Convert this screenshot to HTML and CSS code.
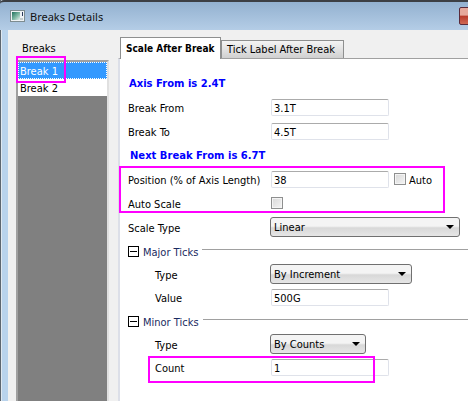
FILE: index.html
```html
<!DOCTYPE html>
<html lang="en">
<head>
  <meta charset="UTF-8">
  <title>Breaks Details</title>
  <link rel="stylesheet" href="styles.css">
</head>
<body>
  <div class="window">
    <div class="titlebar">
      <svg class="app-icon" width="15" height="12" viewBox="0 0 15 12">
        <defs>
          <linearGradient id="iconFill" x1="0" x2="1" y1="0" y2="1">
            <stop offset="0" stop-color="#1f6f5c"/>
            <stop offset="0.55" stop-color="#7fb8a4"/>
            <stop offset="1" stop-color="#e6eeee"/>
          </linearGradient>
        </defs>
        <rect x="0.5" y="0.5" width="14" height="11" fill="#eef2f4" stroke="#7d8c90"/>
        <rect x="2" y="2" width="8" height="8" fill="url(#iconFill)"/>
        <rect x="10" y="8" width="3" height="2" fill="#c4cccc"/>
        <rect x="12" y="2" width="1" height="4" fill="#2a3a5a"/>
      </svg>
      <span class="title">Breaks Details</span>
      <div class="close-btn"></div>
    </div>

    <div class="client">
      <div class="sidebar">
        <div class="list-title">Breaks</div>
        <div class="listbox">
          <div class="list-item selected">Break 1</div>
          <div class="list-item">Break 2</div>
        </div>
      </div>

      <div class="content">
        <div class="tabs">
          <div class="tab active">Scale After Break</div>
          <div class="tab">Tick Label After Break</div>
        </div>

        <div class="panel">
          <div class="row info">Axis From is 2.4T</div>
          <div class="row">
            <label class="label">Break From</label>
            <div class="input">3.1T</div>
          </div>
          <div class="row">
            <label class="label">Break To</label>
            <div class="input">4.5T</div>
          </div>
          <div class="row info next">Next Break From is 6.7T</div>
          <div class="row">
            <label class="label">Position (% of Axis Length)</label>
            <div class="input">38</div>
            <span class="check"></span>
            <span class="check-label">Auto</span>
          </div>
          <div class="row">
            <label class="label">Auto Scale</label>
            <span class="check first"></span>
          </div>
          <div class="row">
            <label class="label">Scale Type</label>
            <div class="select wide">Linear</div>
          </div>
          <div class="row group">
            <span class="toggle"></span>
            <span class="group-name">Major Ticks</span>
            <span class="group-line"></span>
          </div>
          <div class="row short">
            <label class="label sub">Type</label>
            <div class="select mid">By Increment</div>
          </div>
          <div class="row">
            <label class="label sub">Value</label>
            <div class="input">500G</div>
          </div>
          <div class="row group">
            <span class="toggle"></span>
            <span class="group-name">Minor Ticks</span>
            <span class="group-line"></span>
          </div>
          <div class="row short">
            <label class="label sub">Type</label>
            <div class="select small">By Counts</div>
          </div>
          <div class="row">
            <label class="label sub">Count</label>
            <div class="input">1</div>
          </div>
        </div>
      </div>
    </div>

    <!-- Marcas magenta sobre la captura -->
    <div class="mark mark-list"></div>
    <div class="mark mark-position"></div>
    <div class="mark mark-count"></div>
  </div>
</body>
</html>
```

FILE: styles.css
```css
body {
  margin: 0;
  font-family: "DejaVu Sans Condensed", "DejaVu Sans", sans-serif;
  font-size: 11px;
  color: #000;
  overflow: hidden;
}

.window {
  position: relative;
  width: 468px;
  height: 401px;
  display: flex;
  flex-direction: column;
  background: linear-gradient(to right, #5d6670 1px, #dfe8f0 1px, #dfe8f0 2px, #b9d3ec 2px);
  overflow: hidden;
}

/* Barra de titulo */
.titlebar {
  height: 28px;
  border-top: 2px solid #3c3f44;
  border-top-left-radius: 4px;
  display: flex;
  align-items: center;
  padding-left: 10px;
  background: linear-gradient(#93b1d0, #b4cde6);
}

.app-icon {
  margin-right: 5px;
}

.title {
  font-family: "Noto Sans", sans-serif;
  font-size: 11px;
  color: #111;
}

.close-btn {
  width: 12px;
  height: 16px;
  margin-left: auto;
  margin-right: -5px;
  border: 1px solid #5a2a3a;
  border-radius: 2px;
  background: linear-gradient(#e6a99c 45%, #b8392a 50%, #cf6a55);
}

.client {
  flex: 1;
  display: flex;
  margin-left: 8px;
  background: #f0f0f0;
  min-height: 0;
}

/* Lista de la izquierda */
.sidebar {
  width: 110px;
  flex: none;
  padding: 8px 0 0 8px;
  box-sizing: border-box;
}

.list-title {
  height: 22px;
  line-height: 21px;
  padding-left: 6px;
}

.listbox {
  height: 400px;
  width: 93px;
  box-sizing: border-box;
  border: 2px solid #a0a0a0;
  border-right-color: #e0e0e0;
  border-bottom: none;
  background: #808080;
}

.list-item {
  height: 17px;
  line-height: 19px;
  padding-left: 2px;
  background: #fff;
}

.list-item.selected {
  background: #3399ff;
  color: #fff;
  outline: 1px dotted #fff;
  outline-offset: -1px;
}

/* Pestanas */
.content {
  flex: 1;
  min-width: 0;
  display: flex;
  flex-direction: column;
}

.tabs {
  height: 28px;
  flex: none;
  display: flex;
  align-items: flex-end;
  padding-left: 2px;
}

.tab {
  width: 116px;
  height: 17px;
  line-height: 18px;
  padding-left: 5px;
  white-space: nowrap;
  border: 1px solid #8e8f8f;
  border-bottom: none;
  background: linear-gradient(#f4f4f4, #d0d0d0);
}

.tab.active {
  width: 94px;
  height: 21px;
  line-height: 22px;
  padding-left: 5px;
  font-weight: 700;
  font-size: 10px;
  background: #fff;
  margin-bottom: -1px;
  position: relative;
  z-index: 1;
}

.panel {
  flex: 1;
  background: #fff;
  border-top: 1px solid #a0a0a0;
  border-left: 2px solid #dcdfe8;
  padding: 12px 0 0 8px;
}

.row {
  height: 24px;
  display: flex;
  align-items: center;
}

.row.short {
  height: 22px;
}

.info {
  color: #0000ff;
  font-weight: 700;
  font-family: "DejaVu Sans", sans-serif;
  font-size: 10px;
  padding-left: 1px;
}

.next {
  padding-left: 2px;
}

.label {
  width: 143px;
  flex: none;
  padding-top: 2px;
}

.label.sub {
  padding-left: 27px;
  box-sizing: border-box;
}

.input {
  width: 118px;
  height: 17px;
  line-height: 17px;
  box-sizing: border-box;
  padding-left: 2px;
  border: 1px solid #dfe2ea;
  border-top-color: #ababab;
  border-radius: 2px;
}

.check {
  width: 10px;
  height: 10px;
  margin-left: 5px;
  border: 1px solid #8e8f8f;
  background: linear-gradient(135deg, #d8d8d8, #f4f4f4);
  box-shadow: inset 0 0 0 1px #f4f4f4;
}

.check.first {
  margin-left: 0;
}

.check-label {
  margin-left: 3px;
  padding-top: 2px;
}

.select {
  height: 20px;
  line-height: 19px;
  box-sizing: border-box;
  margin-left: -1px;
  padding-left: 3px;
  border: 1px solid #707070;
  border-radius: 3px;
  background: linear-gradient(#f4f4f4 45%, #d8d8d8 55%, #e6e6e6);
  position: relative;
}

/* Flecha del combo */
.select::after {
  content: "";
  position: absolute;
  right: 5px;
  top: 7px;
  border-top: 4px solid #000;
  border-left: 4px solid transparent;
  border-right: 4px solid transparent;
}

.select.wide { width: 190px; }
.select.mid { width: 142px; }
.select.small { width: 96px; }

.toggle {
  width: 9px;
  height: 9px;
  border: 1px solid #000;
  position: relative;
  margin-right: 4px;
}

.toggle::after {
  content: "";
  position: absolute;
  left: 1px;
  right: 1px;
  top: 4px;
  height: 1px;
  background: #000;
}

.group-name {
  color: #1a2a60;
  padding-top: 2px;
}

.group-line {
  flex: 1;
  height: 1px;
  background: #a0a0a0;
  margin: -3px 0 0 4px;
}

/* Marcas magenta */
.mark {
  position: absolute;
  border: 2px solid #ff00ff;
  box-sizing: border-box;
}

.mark-list {
  left: 16px;
  top: 56px;
  width: 50px;
  height: 27px;
}

.mark-position {
  left: 119px;
  top: 166px;
  width: 326px;
  height: 47px;
}

.mark-count {
  left: 148px;
  top: 356px;
  width: 227px;
  height: 27px;
}
```
